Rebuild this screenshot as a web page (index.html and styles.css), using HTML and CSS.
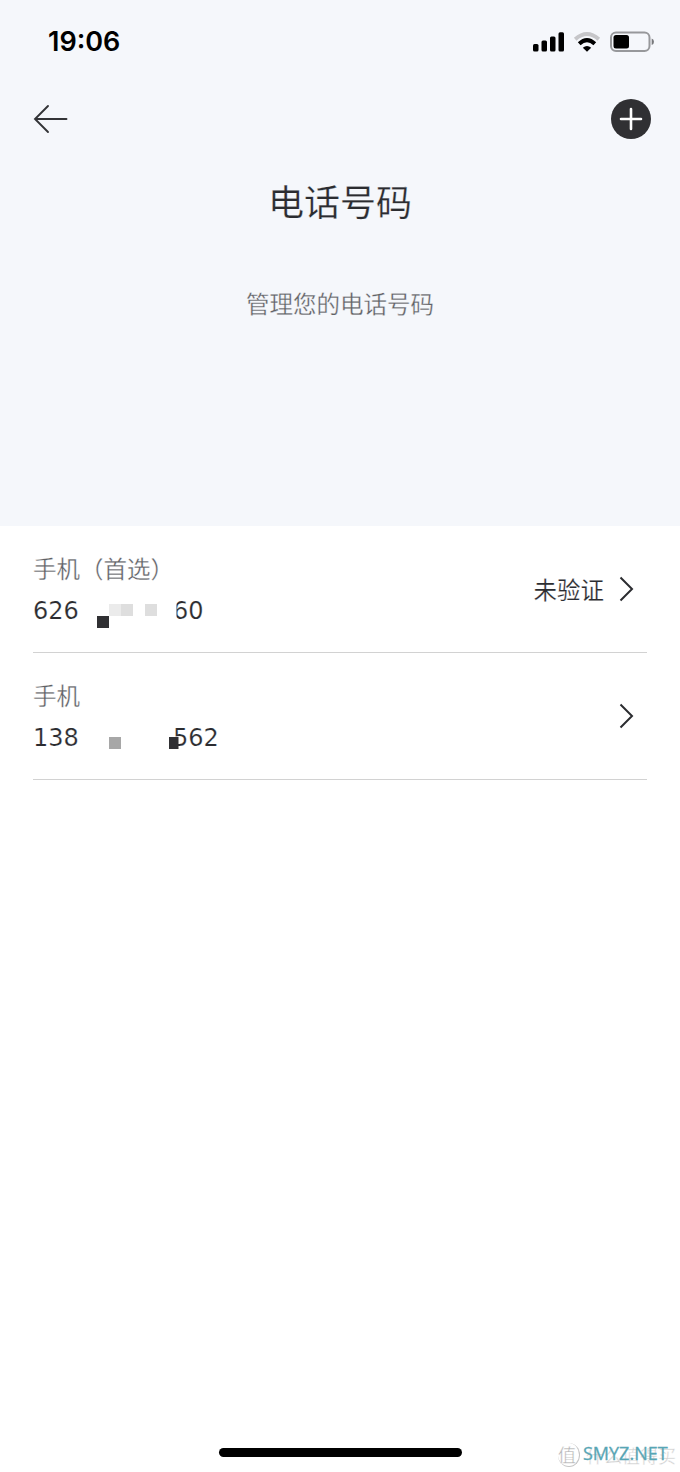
FILE: index.html
```html
<!DOCTYPE html>
<html lang="zh-CN">
<head>
<meta charset="utf-8">
<title>电话号码</title>
<link rel="stylesheet" href="styles.css">
</head>
<body>
<main class="screen">
  <header class="hero">
    <div class="status">
      <span class="time">19:06</span>
      <svg class="status-icons" width="122" height="22" viewBox="0 0 122 22">
        <rect x="1" y="13" width="5.5" height="7.5" rx="1.5"/>
        <rect x="9.5" y="9.5" width="5.5" height="11" rx="1.5"/>
        <rect x="18" y="5.5" width="5.5" height="15" rx="1.5"/>
        <rect x="26.5" y="1.2" width="5.5" height="19.3" rx="1.5"/>
        <g fill="none" stroke-width="4">
          <path d="M43.200 8.200 Q55 -2.200 66.800 8.200" stroke="#c6c6c9"/>
          <path d="M47.200 12.800 Q55 5.600 62.800 12.800" stroke="#000"/>
        </g>
        <path d="M50.800 16.800 Q55 13.200 59.200 16.800 L55 20.800Z"/>
        <rect x="79" y="1.500" width="38.500" height="18.500" rx="5" fill="none" stroke="#97989b" stroke-width="2"/>
        <rect x="81.500" y="4" width="15.500" height="13.500" rx="2.500"/>
        <path d="M119.700 7.500 Q122 8.400 122 10.800 Q122 13.200 119.700 14.100Z" fill="#77787b"/>
      </svg>
    </div>
    <nav class="toolbar">
      <svg width="36" height="40" viewBox="0 0 36 40" fill="none" stroke="#333437" stroke-width="1.900" stroke-linecap="round"><path d="M16 7 L3 20 L16 33 M3 20H34.500"/></svg>
      <svg width="40" height="40" viewBox="0 0 40 40"><circle cx="20" cy="20" r="20" fill="#303033"/><path d="M20 10V30M10 20H30" stroke="#fff" stroke-width="2.600" stroke-linecap="round"/></svg>
    </nav>
    <h1 class="title">电话号码</h1>
    <p class="subtitle">管理您的电话号码</p>
  </header>
  <ul class="list">
    <li class="row">
      <div class="entry">
        <div class="label">手机（首选）</div>
        <div class="number"><span>626</span>
          <span class="tail">60</span>
          <svg class="mask" width="145" height="32" viewBox="0 0 145 32">
            <path d="M138 0h5.500v28h-5.500z" fill="#fff"/>
            <path d="M64 18h12v12H64z" fill="#303033"/>
            <path d="M76 6h12v12H76z" fill="#ebebeb"/>
            <path d="M88 6h12v12H88zM112 6h12v12h-12z" fill="#dedede"/>
          </svg>
        </div>
      </div>
      <span class="state">未验证</span>
      <svg class="chevron" width="16" height="26" viewBox="0 0 16 26"><path d="M2.500 1.500L14 13L2.500 24.500"/></svg>
    </li>
    <li class="row">
      <div class="entry">
        <div class="label">手机</div>
        <div class="number"><span>138</span>
          <span class="tail">562</span>
          <svg class="mask" width="146" height="32" viewBox="0 0 146 32">
            <path d="M76 12h12v12H76z" fill="#a7a7a7"/>
            <path d="M136 12h9.500v12h-9.500z" fill="#303033"/>
          </svg>
        </div>
      </div>
      <svg class="chevron" width="16" height="26" viewBox="0 0 16 26"><path d="M2.500 1.500L14 13L2.500 24.500"/></svg>
    </li>
  </ul>
  <div class="home-bar"></div>
  <div class="watermark">
    <span class="badge">值</span>
    <span class="mark-text">什么值得买</span>
    <span class="site">SMYZ.NET</span>
  </div>
</main>
</body>
</html>
```
FILE: styles.css
```css
* { box-sizing: border-box; }
body {
  margin: 0;
  background: #fff;
  color: #2b2c30;
  font-family: "Noto Sans CJK SC", sans-serif;
}
.screen {
  position: relative;
  display: flex;
  flex-direction: column;
  height: 1472px;
  overflow: hidden;
}
.hero {
  height: 526px;
  background: #f5f7fb;
}
.status {
  display: flex;
  justify-content: space-between;
  align-items: center;
  height: 84px;
  padding: 0 26px 0 48px;
}
.time {
  font: 600 27px/32px Inter, sans-serif;
  color: #000;
}
.toolbar {
  display: flex;
  justify-content: space-between;
  align-items: center;
  height: 70px;
  padding: 0 29px 0 32px;
}
.title {
  margin: 20px 0 0;
  font-size: 36px;
  font-weight: 400;
  line-height: 52px;
  text-align: center;
  -webkit-text-stroke: 0.250px #f5f7fb;
}
.subtitle {
  margin: 59px 0 0;
  font-size: 23.500px;
  line-height: 36px;
  text-align: center;
  color: #606165;
  -webkit-text-stroke: 0.300px #f5f7fb;
}
.list {
  margin: 0;
  padding: 0 33px;
  list-style: none;
}
.row {
  display: flex;
  align-items: center;
  height: 127px;
  border-bottom: 1px solid #d2d2d2;
}
.entry {
  flex: 1;
  padding-top: 5px;
}
.label {
  font-size: 23.500px;
  line-height: 36px;
  color: #606165;
  -webkit-text-stroke: 0.300px #fff;
}
.number {
  position: relative;
  display: flex;
  height: 48px;
  font: 24px/50px "DejaVu Sans", sans-serif;
  -webkit-text-stroke: 0.200px #fff;
}
.number > span:first-child { width: 140px; }
.mask {
  position: absolute;
  left: 0;
  top: 12px;
}
.state {
  margin-right: 14px;
  font-size: 23.500px;
  line-height: 36px;
  -webkit-text-stroke: 0.200px #fff;
}
.chevron {
  margin-right: 13px;
  fill: none;
  stroke: #2b2c30;
  stroke-width: 2;
}
.home-bar {
  width: 243px;
  height: 9px;
  margin: auto auto 15px 219px;
  border-radius: 5px;
  background: #000;
}
.watermark {
  position: absolute;
  left: 558px;
  top: 1440px;
  display: flex;
  align-items: center;
  height: 30px;
  color: #cfcfcf;
}
.badge {
  width: 22px;
  height: 24px;
  border-right: 1px solid #c5c5c5;
  border-bottom: 1px solid #c5c5c5;
  border-radius: 50%;
  font-size: 18px;
  line-height: 22px;
  color: #b5b5b5;
  -webkit-text-stroke: 0.300px #fff;
}
.mark-text {
  margin-left: 6px;
  font-size: 18px;
  line-height: 30px;
  white-space: nowrap;
  -webkit-text-stroke: 0.400px #fff;
}
.site {
  position: absolute;
  left: 25px;
  top: -1px;
  font: 18px/28px "Open Sans", sans-serif;
  color: #58a6b5;
  -webkit-text-stroke: 0.300px #58a6b5;
}
```
